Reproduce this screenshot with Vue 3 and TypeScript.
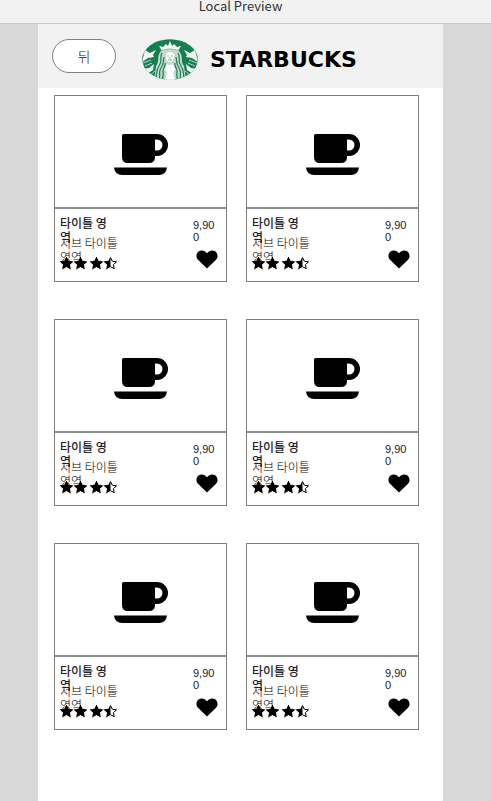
<script setup lang="ts">
import { ref } from 'vue'

interface Product {
  id: number
  title: string
  subtitle: string
  price: string
  liked: boolean
}

const products = ref<Product[]>(
  Array.from({ length: 6 }, (_, i) => ({
    id: i + 1,
    title: '타이틀 영역',
    subtitle: '서브 타이틀 영역',
    price: '9,900',
    liked: true,
  })),
)
</script>

<template>
  <div class="preview">
    <div class="titlebar">Local Preview</div>
    <div class="stage">
      <main class="phone">
        <header class="header">
          <button class="back" type="button">뒤</button>
          <div class="brand">
            <svg class="emblem" viewBox="0 0 56 41" aria-hidden="true">
              <defs>
                <clipPath id="seal"><ellipse cx="28" cy="20.5" rx="27.8" ry="20.3" /></clipPath>
              </defs>
              <g clip-path="url(#seal)">
                <rect width="56" height="41" fill="#14804f" />
                <path d="M3 11l5 3 6-3-3 5 1 2-6 1-6 4zM53 11l-5 3-6-3 3 5-1 2 6 1 6 4z" fill="#f4f6f5" />
                <path d="M0 30l7-1 5-4-1 6-6 4zM56 30l-7-1-5-4 1 6 6 4z" fill="#eef2f0" />
                <path d="M19 12Q28 6 37 12C42 18 38 22 42 27L44 41H12L14 27C18 22 14 18 19 12z" fill="#c6d8cf" />
                <g fill="none" stroke="#14804f" stroke-width="1.2">
                  <path d="M20 14c-3 5 1 8-3 13s-1 9-4 14M22 18c-1 5 0 7-3 11s0 7-2 12M23 24c1 3-2 5-2 8s1 5-1 9" />
                  <path d="M36 14c3 5-1 8 3 13s1 9 4 14M34 18c1 5 0 7 3 11s0 7 2 12M33 24c-1 3 2 5 2 8s-1 5 1 9" />
                </g>
                <g fill="none" stroke="#b9d2c5" stroke-width="1">
                  <path d="M1 24l8-3M3 27l7-3M7 37l6-5M55 24l-8-3M53 27l-7-3M49 37l-6-5" />
                </g>
                <path d="M24 15q4-4 8 0v4q-1 4-4 4t-4-4zM25 25q3 2 6 0l2 5-2 4 2 7H23l2-7-2-4z" fill="#fff" />
                <path d="M17 7l4 1 3-3 2 2 2-5 2 5 2-2 3 3 4-1-3 5q-8-3-16 0z" fill="#fff" />
                <path d="M18 12q10-4 20 0M25 17h2M29 17h2M28 18v2M26 21h4" fill="none" stroke="#5aa380" stroke-width=".8" />
              </g>
            </svg>
            <span class="wordmark">STARBUCKS</span>
          </div>
        </header>

        <section class="grid">
          <article v-for="item in products" :key="item.id" class="card">
            <div class="picture">
              <svg class="cup" viewBox="0 0 56 43" aria-hidden="true">
                <path
                  fill-rule="evenodd"
                  d="M10.5 1H44a11 11 0 0 1 0 22h-2v1q0 6-6 6H15q-6 0-6-6V2.500Q9 1 10.500 1zM42 6.500v11h2a5.500 5.500 0 0 0 0-11z"
                />
                <path d="M1 34.500h53q-1 7.500-8 7.500H9q-7 0-8-7.500z" />
              </svg>
            </div>
            <div class="info">
              <div class="texts">
                <h2 class="title">{{ item.title }}</h2>
                <p class="subtitle">{{ item.subtitle }}</p>
                <svg class="stars" viewBox="0 0 58 14" role="img" aria-label="3.5 / 5">
                  <path d="M6.500 0.500l2.100 4.300 4.900.6-3.600 3.300 1 4.800-4.400-2.400L2.100 13.500l1-4.800L-.5 5.400l4.900-.6z" />
                  <path d="M20.500 0.500l2.100 4.300 4.900.6-3.600 3.300 1 4.800-4.400-2.400-4.400 2.400 1-4.800-3.600-3.300 4.900-.6z" />
                  <path d="M36.500 0.500l2.100 4.300 4.900.6-3.600 3.300 1 4.800-4.400-2.400-4.400 2.400 1-4.800-3.600-3.300 4.900-.6z" />
                  <path d="M50.500 0.500v10.600l-4.400 2.400 1-4.800-3.600-3.300 4.900-.6z" />
                  <path d="M50.500 1.500l1.800 3.700 4.200.6-3.100 2.800.8 4.100-3.700-2" fill="none" stroke="#000" />
                </svg>
              </div>
              <div class="side">
                <span class="price">{{ item.price }}</span>
                <button
                  class="like"
                  type="button"
                  aria-label="좋아요"
                  :aria-pressed="item.liked"
                  @click="item.liked = !item.liked"
                >
                  <svg class="heart" :class="{ off: !item.liked }" viewBox="0 0 22 19" aria-hidden="true">
                    <path d="M11 18.500L2 9.800C-1 6.500.5 1 5.500.6 8 .5 10 2 11 3.500 12 2 14 .5 16.500.6 21.500 1 23 6.500 20 9.800z" />
                  </svg>
                </button>
              </div>
            </div>
          </article>
        </section>
      </main>
    </div>
  </div>
</template>

<style>
body {
  margin: 0;
  background: #d8d8d8;
}
</style>

<style scoped>
.preview {
  display: flex;
  flex-direction: column;
  min-height: 100vh;
  font-family: "Noto Sans CJK KR", sans-serif;
  color: #222;
}

.titlebar {
  box-sizing: border-box;
  height: 24px;
  padding-right: 10px;
  border-bottom: 1px solid #c8c8c8;
  background: #f2f2f2;
  color: #333;
  font-size: 13px;
  line-height: 12px;
  text-align: center;
}

.stage {
  display: flex;
  flex: 1;
  padding: 0 48px 0 38px;
  background: #d8d8d8;
}

.phone {
  flex: 1;
  background: #fff;
}

.header {
  display: flex;
  align-items: center;
  gap: 26px;
  box-sizing: border-box;
  height: 64px;
  padding: 0 14px;
  background: #f2f2f2;
}

.back {
  width: 64px;
  height: 34px;
  padding: 0;
  border: 1px solid #808080;
  border-radius: 17px;
  background: #fff;
  color: #222;
  font-family: inherit;
  font-size: 14px;
  font-weight: 300;
}

.brand {
  display: flex;
  align-items: center;
  gap: 12px;
}

.emblem {
  width: 56px;
  height: 41px;
  margin-top: 6px;
}

.wordmark {
  padding-top: 8px;
  color: #000;
  font-family: "DejaVu Sans", sans-serif;
  font-size: 22px;
  font-weight: 700;
  line-height: 20px;
}

.grid {
  display: grid;
  grid-template-columns: 1fr 1fr;
  gap: 37px 19px;
  padding: 7px 24px 37px 16px;
}

.card {
  border: 1px solid #808080;
  background: #fff;
}

.picture {
  display: flex;
  align-items: center;
  justify-content: center;
  box-sizing: border-box;
  height: 113px;
  padding-top: 6px;
  border-bottom: 2px solid #8c908e;
}

.cup {
  width: 56px;
  height: 43px;
}

.info {
  display: flex;
  justify-content: space-between;
  box-sizing: border-box;
  height: 72px;
  padding: 7px 5px 0;
}

.texts {
  width: 60px;
}

.title,
.subtitle {
  height: 20px;
  margin: 0;
  font-size: 12px;
  line-height: 14px;
}

.title {
  width: 54px;
  font-weight: 500;
}

.subtitle {
  color: #000;
  font-weight: 300;
}

.stars {
  display: block;
  width: 58px;
  height: 14px;
}

.side {
  display: flex;
  flex-direction: column;
  align-items: center;
  gap: 7px;
  width: 28px;
  padding-top: 3px;
}

.price {
  align-self: flex-start;
  width: 24px;
  font-family: "Liberation Sans", sans-serif;
  font-size: 11px;
  line-height: 12px;
  word-break: break-all;
}

.like {
  padding: 0;
  border: 0;
  background: none;
}

.heart {
  display: block;
  width: 22px;
  height: 19px;
}

.heart.off {
  fill: none;
  stroke: #000;
}
</style>
